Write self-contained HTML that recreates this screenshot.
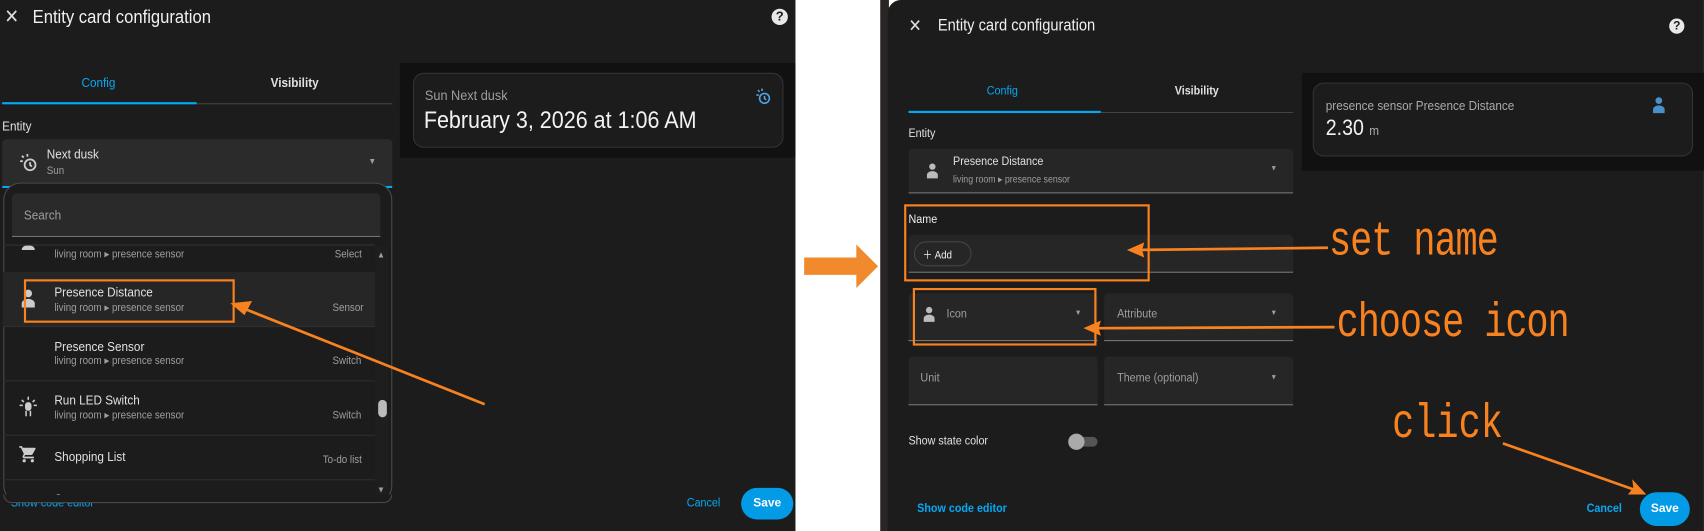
<!DOCTYPE html>
<html><head><meta charset="utf-8"><style>
html,body{margin:0;padding:0;background:#fff;width:1704px;height:531px;overflow:hidden}
#w{position:absolute;left:0;top:0;width:1568px;height:489px;transform:scale(1.0867);transform-origin:0 0;font-family:"Liberation Sans",sans-serif}
.a{position:absolute}
.t{position:absolute;white-space:nowrap;color:#e1e1e1;transform:scaleX(0.9);transform-origin:0 0}
.g{color:#9e9e9e}
.b{color:#03a9f4}
.fld{position:absolute;background:#262626;border-radius:4px 4px 0 0;border-bottom:1px solid #8a8a8a;box-sizing:border-box}
.ob{position:absolute;border:2px solid #f7821f;box-sizing:border-box}
.ann{position:absolute;color:#f7821f;font-family:"Liberation Mono",monospace;white-space:nowrap;transform:scaleY(1.3);transform-origin:0 0}
.sep{position:absolute;left:3px;width:342px;height:1px;background:#2e2e2e}
</style></head><body><div id="w">
<!-- left panel -->
<div class="a" style="left:0;top:0;width:732px;height:489px;background:#1c1c1c"></div>
<div class="t" style="left:4px;top:5px;font-size:18px;color:#ddd">✕</div>
<div class="t" style="left:30px;top:6px;font-size:17px;color:#f0f0f0">Entity card configuration</div>
<div class="a" style="left:710px;top:8px;width:15px;height:15px;border-radius:50%;background:#e8e8e8;color:#1c1c1c;font-size:12px;font-weight:bold;text-align:center;line-height:15px">?</div>
<div class="t b" style="left:75px;top:69px;font-size:12px">Config</div>
<div class="t" style="left:249px;top:69px;font-size:12px;font-weight:bold">Visibility</div>
<div class="a" style="left:2px;top:94px;width:179px;height:2px;background:#03a9f4"></div>
<div class="a" style="left:181px;top:95px;width:180px;height:1px;background:#444"></div>
<div class="a" style="left:368px;top:58px;width:364px;height:87px;background:#111"></div>
<div class="a" style="left:380px;top:67px;width:341px;height:69px;background:#1c1c1c;border:1px solid #333;border-radius:10px;box-sizing:border-box"></div>
<div class="t g" style="left:391px;top:80px;font-size:13px">Sun Next dusk</div>
<div class="t" style="left:390px;top:98px;font-size:22px;color:#f2f2f2">February 3, 2026 at 1:06 AM</div>
<svg class="a" style="left:693px;top:80px" width="18" height="18" viewBox="0 0 24 24"><circle cx="14" cy="14" r="6" fill="none" stroke="#4fa3e0" stroke-width="2"/><path d="M14 11v3l2 2M4 10h3M6 4l2 2M11 2v3" stroke="#4fa3e0" stroke-width="2" fill="none"/></svg>
<div class="t" style="left:2px;top:109px;font-size:12px">Entity</div>
<div class="fld" style="left:2px;top:128px;width:359px;height:45px;background:#2b2b2b;border-bottom:2px solid #03a9f4"></div>
<svg class="a" style="left:16px;top:140px" width="20" height="20" viewBox="0 0 24 24"><circle cx="14" cy="14" r="6" fill="none" stroke="#ccc" stroke-width="2"/><path d="M14 11v3l2 2M3 10h3M5 4l2 2M11 2v3" stroke="#ccc" stroke-width="2" fill="none"/></svg>
<div class="t" style="left:43px;top:135px;font-size:12px">Next dusk</div>
<div class="t g" style="left:43px;top:152px;font-size:10px">Sun</div>
<div class="t g" style="left:339px;top:144px;font-size:8px">▼</div>
<!-- popup -->
<div class="a" style="left:3px;top:168px;width:358px;height:295px;background:#1c1c1c;border:1px solid #4a4a4a;border-radius:16px;box-sizing:border-box;overflow:hidden"></div>
<div class="fld" style="left:11px;top:178px;width:339px;height:40px;background:#2a2a2a"></div>
<div class="t g" style="left:22px;top:191px;font-size:12px">Search</div>
<div class="a" style="left:3px;top:225px;width:342px;height:1px;background:#333"></div>
<div class="a" style="left:20px;top:226px;width:12px;height:4px;border-radius:6px 6px 0 0;background:#ccc"></div>
<div class="t g" style="left:50px;top:229px;font-size:10px">living room ▸ presence sensor</div>
<div class="t g" style="left:308px;top:229px;font-size:10px">Select</div>
<div class="a" style="left:3px;top:250px;width:342px;height:50px;background:#262626"></div>
<svg class="a" style="left:19px;top:266px" width="14" height="18" viewBox="0 0 14 18"><circle cx="7" cy="4" r="3.5" fill="#ccc"/><path d="M1 17v-4c0-2 3-4 6-4s6 2 6 4v4z" fill="#ccc"/></svg>
<div class="t" style="left:50px;top:262px;font-size:12px">Presence Distance</div>
<div class="t g" style="left:50px;top:278px;font-size:10px">living room ▸ presence sensor</div>
<div class="t g" style="left:306px;top:278px;font-size:10px">Sensor</div>
<div class="sep" style="top:300px"></div>
<div class="t" style="left:50px;top:312px;font-size:12px">Presence Sensor</div>
<div class="t g" style="left:50px;top:327px;font-size:10px">living room ▸ presence sensor</div>
<div class="t g" style="left:306px;top:327px;font-size:10px">Switch</div>
<div class="sep" style="top:350px"></div>
<svg class="a" style="left:18px;top:364px" width="16" height="20" viewBox="0 0 16 20"><rect x="5" y="6" width="6" height="8" rx="3" fill="#ccc"/><path d="M6 14v5M10 14v5M8 1v3M2 4l2 2M14 4l-2 2M0 9h3M13 9h3" stroke="#ccc" stroke-width="1.4"/></svg>
<div class="t" style="left:50px;top:361px;font-size:12px">Run LED Switch</div>
<div class="t g" style="left:50px;top:377px;font-size:10px">living room ▸ presence sensor</div>
<div class="t g" style="left:306px;top:377px;font-size:10px">Switch</div>
<div class="sep" style="top:400px"></div>
<svg class="a" style="left:17px;top:409px" width="18" height="18" viewBox="0 0 24 24"><path fill="#ccc" d="M17 18a2 2 0 0 1 2 2 2 2 0 0 1-2 2 2 2 0 0 1-2-2c0-1.1.9-2 2-2M1 2h3.27l.94 2H20a1 1 0 0 1 1 1c0 .17-.05.34-.12.5l-3.58 6.47c-.34.61-1 1.03-1.75 1.03H8.1l-.9 1.63-.3.37h12v2H7a2 2 0 0 1-2-2c0-.35.09-.68.24-.96l1.36-2.45L3 4H1V2m6 16a2 2 0 0 1 2 2 2 2 0 0 1-2 2 2 2 0 0 1-2-2c0-1.1.9-2 2-2z"/></svg>
<div class="t" style="left:50px;top:413px;font-size:12px">Shopping List</div>
<div class="t g" style="left:297px;top:418px;font-size:10px">To-do list</div>
<div class="sep" style="top:441px"></div>
<div class="t" style="left:50px;top:452px;font-size:12px;height:9px;overflow:hidden">Sun</div>
<div class="a" style="left:345px;top:226px;width:12px;height:236px;background:#1e1e1e"></div>
<div class="t g" style="left:347px;top:230px;font-size:8px">▲</div>
<div class="a" style="left:348px;top:368px;width:8px;height:16px;border-radius:4px;background:#bbb"></div>
<div class="t g" style="left:347px;top:446px;font-size:8px">▼</div>
<div class="t b" style="left:10px;top:457px;font-size:11px">Show code editor</div>
<div class="a" style="left:3px;top:455px;width:358px;height:8px;background:#1c1c1c;border-radius:0 0 16px 16px;border:1px solid #4a4a4a;border-top:none;box-sizing:border-box"></div>
<div class="t b" style="left:632px;top:457px;font-size:11px">Cancel</div>
<div class="a" style="left:682px;top:449px;width:48px;height:29px;border-radius:15px;background:#039be5;color:#fff;font-size:11px;font-weight:bold;text-align:center;line-height:29px">Save</div>
<div class="ob" style="left:22px;top:257px;width:194px;height:40px"></div>
<svg class="a" style="left:0;top:0" width="732" height="489"><line x1="446" y1="372" x2="222" y2="283" stroke="#f7821f" stroke-width="2.5"/><path d="M212 279l20 -2 -7 13z" fill="#f7821f"/></svg>
<!-- middle arrow -->
<svg class="a" style="left:738px;top:224px" width="72" height="42"><path d="M2 13h48V1l20 20-20 20V29H2z" fill="#f08a2c"/></svg>
<div class="a" style="left:810px;top:0;width:8px;height:489px;background:#2a2424"></div>
<!-- right panel -->
<div class="a" style="left:817px;top:0;width:751px;height:489px;background:#1c1c1c;border-radius:12px 0 0 0"></div>
<div class="t" style="left:836px;top:14px;font-size:16px;color:#ddd">✕</div>
<div class="t" style="left:863px;top:15px;font-size:15px;color:#f0f0f0">Entity card configuration</div>
<div class="a" style="left:1536px;top:17px;width:14px;height:14px;border-radius:50%;background:#e8e8e8;color:#1c1c1c;font-size:11px;font-weight:bold;text-align:center;line-height:14px">?</div>
<div class="t b" style="left:908px;top:78px;font-size:11px">Config</div>
<div class="t" style="left:1081px;top:78px;font-size:11px;font-weight:bold">Visibility</div>
<div class="a" style="left:836px;top:102px;width:177px;height:2px;background:#03a9f4"></div>
<div class="a" style="left:1013px;top:103px;width:177px;height:1px;background:#444"></div>
<div class="a" style="left:1198px;top:67px;width:370px;height:90px;background:#111"></div>
<div class="a" style="left:1208px;top:76px;width:350px;height:68px;background:#1c1c1c;border:1px solid #333;border-radius:10px;box-sizing:border-box"></div>
<div class="t g" style="left:1220px;top:90px;font-size:12px;color:#aaa">presence sensor Presence Distance</div>
<div class="t" style="left:1220px;top:107px;font-size:20px;color:#f2f2f2">2.30 <span style="font-size:12px;color:#aaa">m</span></div>
<svg class="a" style="left:1520px;top:89px" width="13" height="16" viewBox="0 0 14 18"><circle cx="7" cy="4" r="3.5" fill="#4a90c8"/><path d="M1 17v-4c0-2 3-4 6-4s6 2 6 4v4z" fill="#4a90c8"/></svg>
<div class="t" style="left:836px;top:117px;font-size:11px">Entity</div>
<div class="fld" style="left:836px;top:137px;width:354px;height:41px"></div>
<svg class="a" style="left:852px;top:150px" width="12" height="15" viewBox="0 0 14 18"><circle cx="7" cy="4" r="3.5" fill="#bbb"/><path d="M1 17v-4c0-2 3-4 6-4s6 2 6 4v4z" fill="#bbb"/></svg>
<div class="t" style="left:877px;top:143px;font-size:11px">Presence Distance</div>
<div class="t g" style="left:877px;top:160px;font-size:9px">living room ▸ presence sensor</div>
<div class="t g" style="left:1169px;top:152px;font-size:7px">▼</div>
<div class="t" style="left:836px;top:196px;font-size:11px;color:#f0f0f0">Name</div>
<div class="fld" style="left:836px;top:216px;width:354px;height:35px"></div>
<div class="a" style="left:841px;top:222px;width:53px;height:23px;border:1px solid #444;border-radius:12px;box-sizing:border-box"></div>
<div class="t" style="left:849px;top:226px;font-size:10px;color:#eee">＋ Add</div>
<div class="fld" style="left:836px;top:270px;width:174px;height:44px"></div>
<svg class="a" style="left:849px;top:282px" width="12" height="15" viewBox="0 0 14 18"><circle cx="7" cy="4" r="3.5" fill="#bbb"/><path d="M1 17v-4c0-2 3-4 6-4s6 2 6 4v4z" fill="#bbb"/></svg>
<div class="t g" style="left:871px;top:283px;font-size:11px">Icon</div>
<div class="t g" style="left:989px;top:285px;font-size:7px">▼</div>
<div class="fld" style="left:1016px;top:270px;width:174px;height:44px"></div>
<div class="t g" style="left:1028px;top:283px;font-size:11px">Attribute</div>
<div class="t g" style="left:1169px;top:285px;font-size:7px">▼</div>
<div class="fld" style="left:836px;top:328px;width:174px;height:45px"></div>
<div class="t g" style="left:847px;top:342px;font-size:11px">Unit</div>
<div class="fld" style="left:1016px;top:328px;width:174px;height:45px"></div>
<div class="t g" style="left:1028px;top:342px;font-size:11px">Theme (optional)</div>
<div class="t g" style="left:1169px;top:344px;font-size:7px">▼</div>
<div class="t" style="left:836px;top:400px;font-size:11px">Show state color</div>
<div class="a" style="left:986px;top:402px;width:24px;height:9px;border-radius:5px;background:#555"></div>
<div class="a" style="left:983px;top:399px;width:15px;height:15px;border-radius:50%;background:#aaa"></div>
<div class="t b" style="left:844px;top:462px;font-size:11px;font-weight:bold">Show code editor</div>
<div class="t b" style="left:1460px;top:462px;font-size:11px;font-weight:bold">Cancel</div>
<div class="a" style="left:1509px;top:453px;width:46px;height:31px;border-radius:16px;background:#039be5;color:#fff;font-size:11px;font-weight:bold;text-align:center;line-height:31px">Save</div>
<div class="ob" style="left:832px;top:188px;width:226px;height:71px"></div>
<div class="ob" style="left:840px;top:265px;width:169px;height:53px"></div>
<div class="ann" style="left:1223px;top:199px;font-size:34px;letter-spacing:-1px">set name</div>
<div class="ann" style="left:1230px;top:274px;font-size:34px;letter-spacing:-1px">choose icon</div>
<div class="ann" style="left:1281px;top:367px;font-size:34px">click</div>
<svg class="a" style="left:0;top:0" width="1568" height="489"><line x1="1222" y1="228" x2="1050" y2="230" stroke="#f7821f" stroke-width="2.5"/><path d="M1037 230l16-7 -2 7 2 7z" fill="#f7821f"/><line x1="1228" y1="301" x2="1010" y2="302" stroke="#f7821f" stroke-width="2.5"/><path d="M997 302l16-7 -2 7 2 7z" fill="#f7821f"/><line x1="1383" y1="408" x2="1505" y2="451" stroke="#f7821f" stroke-width="2.5"/><path d="M1515 455l-17 0 5-6 -1-8z" fill="#f7821f"/></svg>
</div></body></html>
